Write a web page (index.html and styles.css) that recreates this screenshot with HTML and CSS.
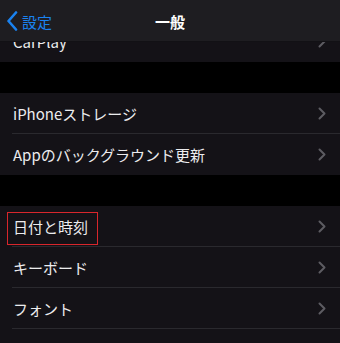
FILE: index.html
```html
<!DOCTYPE html>
<html lang="ja">
<head>
<meta charset="utf-8">
<link rel="stylesheet" href="styles.css">
</head>
<body>
<div class="page">
  <div class="nav">
    <div class="back">
      <svg class="back-icon" width="12" height="20" viewBox="0 0 12 20"><polyline points="10,1.5 2.5,10 10,18.5" fill="none" stroke="#1a82f0" stroke-width="2.6" stroke-linecap="round" stroke-linejoin="round"/></svg>
      <span class="back-label">設定</span>
    </div>
    <div class="title">一般</div>
  </div>
  <div class="list">
    <div class="group">
      <div class="row"><div class="row-inner"><span class="label">CarPlay</span><svg class="chev" width="8" height="13" viewBox="0 0 8 13"><polyline points="1.5,1.5 6.5,6.5 1.5,11.5" fill="none" stroke="#5d5c62" stroke-width="2" stroke-linecap="round" stroke-linejoin="round"/></svg></div></div>
    </div>
    <div class="group">
      <div class="row"><div class="row-inner"><span class="label">iPhoneストレージ</span><svg class="chev" width="8" height="13" viewBox="0 0 8 13"><polyline points="1.5,1.5 6.5,6.5 1.5,11.5" fill="none" stroke="#5d5c62" stroke-width="2" stroke-linecap="round" stroke-linejoin="round"/></svg></div></div>
      <div class="row"><div class="row-inner"><span class="label">Appのバックグラウンド更新</span><svg class="chev" width="8" height="13" viewBox="0 0 8 13"><polyline points="1.5,1.5 6.5,6.5 1.5,11.5" fill="none" stroke="#5d5c62" stroke-width="2" stroke-linecap="round" stroke-linejoin="round"/></svg></div></div>
    </div>
    <div class="group">
      <div class="row"><div class="row-inner"><span class="label">日付と時刻</span><span class="mark"></span><svg class="chev" width="8" height="13" viewBox="0 0 8 13"><polyline points="1.5,1.5 6.5,6.5 1.5,11.5" fill="none" stroke="#5d5c62" stroke-width="2" stroke-linecap="round" stroke-linejoin="round"/></svg></div></div>
      <div class="row"><div class="row-inner"><span class="label">キーボード</span><svg class="chev" width="8" height="13" viewBox="0 0 8 13"><polyline points="1.5,1.5 6.5,6.5 1.5,11.5" fill="none" stroke="#5d5c62" stroke-width="2" stroke-linecap="round" stroke-linejoin="round"/></svg></div></div>
      <div class="row"><div class="row-inner"><span class="label">フォント</span><svg class="chev" width="8" height="13" viewBox="0 0 8 13"><polyline points="1.5,1.5 6.5,6.5 1.5,11.5" fill="none" stroke="#5d5c62" stroke-width="2" stroke-linecap="round" stroke-linejoin="round"/></svg></div></div>
      <div class="row"><div class="row-inner"></div></div>
    </div>
  </div>
</div>
</body>
</html>
```
FILE: styles.css
```css
html, body {
  margin: 0;
  padding: 0;
  background: #000;
}
.page {
  position: relative;
  width: 340px;
  height: 343px;
  overflow: hidden;
  background: #000;
  font-family: "Noto Sans CJK JP", "Noto Sans", sans-serif;
  color: #ececee;
}
.nav {
  position: absolute;
  top: 0;
  left: 0;
  right: 0;
  height: 42px;
  background: #1e1d21;
  border-bottom: 1px solid #121115;
  box-sizing: border-box;
  display: flex;
  align-items: center;
  justify-content: center;
  z-index: 2;
}
.back {
  position: absolute;
  left: 6px;
  top: 0;
  height: 42px;
  display: flex;
  align-items: center;
  gap: 4px;
  color: #1a82f0;
}
.back-label {
  font-size: 15px;
  line-height: 1;
  padding-top: 1px;
}
.title {
  font-size: 15px;
  font-weight: 700;
  color: #fff;
  line-height: 1;
  padding-top: 1px;
}
.list {
  padding-top: 21px;
  display: flex;
  flex-direction: column;
  gap: 31px;
}
.group {
  background: #141217;
}
.row {
  padding-left: 12px;
}
.row-inner {
  position: relative;
  height: 41px;
  box-sizing: border-box;
  border-bottom: 1px solid #2a292e;
  display: flex;
  align-items: center;
  justify-content: space-between;
  padding-left: 1px;
  padding-right: 14px;
}
.row:last-child .row-inner {
  border-bottom: none;
}
.label {
  font-size: 15px;
  line-height: 1;
}
.chev {
  display: block;
}
.mark {
  position: absolute;
  left: -5px;
  top: 6px;
  width: 91px;
  height: 33px;
  box-sizing: border-box;
  border: 1.5px solid #d8262c;
}
```
